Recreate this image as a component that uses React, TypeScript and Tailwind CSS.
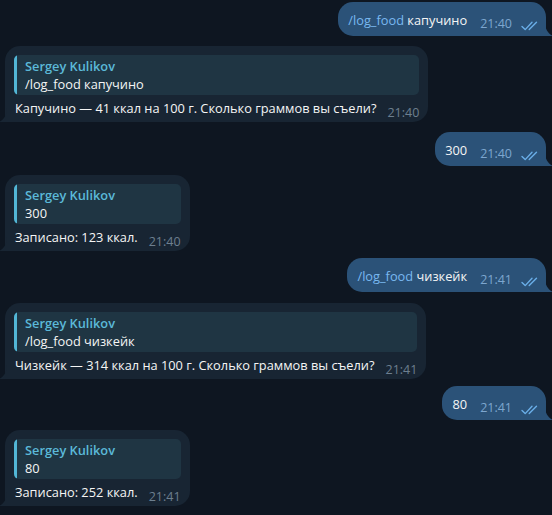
const font = { fontFamily: '"Open Sans", "Noto Sans", sans-serif' }

const Checks = () => (
  <svg width="17" height="10" viewBox="0 0 17 10" className="ml-[9px] mb-[5px] shrink-0">
    <path d="M1 5.5 L4.2 8.6 L11 1.2" stroke="#6aaee8" strokeWidth="1.4" fill="none" strokeLinecap="round" strokeLinejoin="round" />
    <path d="M8.2 8.6 L15.5 1.2" stroke="#6aaee8" strokeWidth="1.4" fill="none" strokeLinecap="round" />
  </svg>
)

const TailRight = () => (
  <svg width="8" height="14" viewBox="0 0 8 14" className="absolute bottom-0 right-[-7px]">
    <path d="M0 0 C0 7 3 11.5 8 14 L0 14 Z" fill="#2b5278" />
  </svg>
)

const TailLeft = () => (
  <svg width="8" height="14" viewBox="0 0 8 14" className="absolute bottom-0 left-[-6px]">
    <path d="M8 0 C8 7 5 11.5 0 14 L8 14 Z" fill="#182533" />
  </svg>
)

const Out = ({ cmd, text, time, mt }: { cmd?: string; text: string; time: string; mt: string }) => (
  <div className={`self-end relative ${mt}`}>
    <div className="flex items-end bg-[#2b5278] rounded-[15px] rounded-br-none h-[34px] pl-[10px] pr-[8px]">
      <div className="text-[12.8px] leading-[18px] text-[#f5f5f5] pb-[7px]">
        {cmd && <span className="text-[#79b8f0]">{cmd} </span>}
        {text}
      </div>
      <div className="ml-[13px] text-[12.5px] leading-[16px] text-[#7da6cf] pb-[4px]">{time}</div>
      <Checks />
    </div>
    <TailRight />
  </div>
)

const In = ({ quote, text, time, mt }: { quote: string; text: string; time: string; mt: string }) => (
  <div className={`self-start relative ${mt}`}>
    <div className="bg-[#182533] rounded-[15px] rounded-bl-none pt-[9px] pl-[9px] pr-[9px]">
      <div className="flex bg-[#1f3543] rounded-[5px] overflow-hidden">
        <div className="w-[3px] bg-[#52b6d6] shrink-0" />
        <div className="pl-[8px] pr-[8px] pt-[2px] pb-[2px]">
          <div className="text-[12.8px] leading-[18px] font-semibold text-[#5bb9d8]">Sergey Kulikov</div>
          <div className="text-[12.8px] leading-[18px] text-[#f5f5f5]">{quote}</div>
        </div>
      </div>
      <div className="flex items-end mt-[4px]">
        <div className="pl-px text-[12.8px] leading-[18px] text-[#f5f5f5] pb-[5px]">{text}</div>
        <div className="ml-[11px] text-[12.5px] leading-[16px] text-[#6d7f8f] pb-px">{time}</div>
      </div>
    </div>
    <TailLeft />
  </div>
)

export default function App() {
  return (
    <div className="w-[552px] h-[515px] bg-[#0e1621] overflow-hidden" style={font}>
      <div className="flex flex-col pl-[5px] pr-[6px]">
        <Out cmd="/log_food" text="капучино" time="21:40" mt="mt-[2px]" />
        <In quote="/log_food капучино" text="Капучино — 41 ккал на 100 г. Сколько граммов вы съели?" time="21:40" mt="mt-[10px]" />
        <Out text="300" time="21:40" mt="mt-[10px]" />
        <In quote="300" text="Записано: 123 ккал." time="21:40" mt="mt-[9px]" />
        <Out cmd="/log_food" text="чизкейк" time="21:41" mt="mt-[7px]" />
        <In quote="/log_food чизкейк" text="Чизкейк — 314 ккал на 100 г. Сколько граммов вы съели?" time="21:41" mt="mt-[11px]" />
        <Out text="80" time="21:41" mt="mt-[7px]" />
        <In quote="80" text="Записано: 252 ккал." time="21:41" mt="mt-[10px]" />
      </div>
    </div>
  )
}
